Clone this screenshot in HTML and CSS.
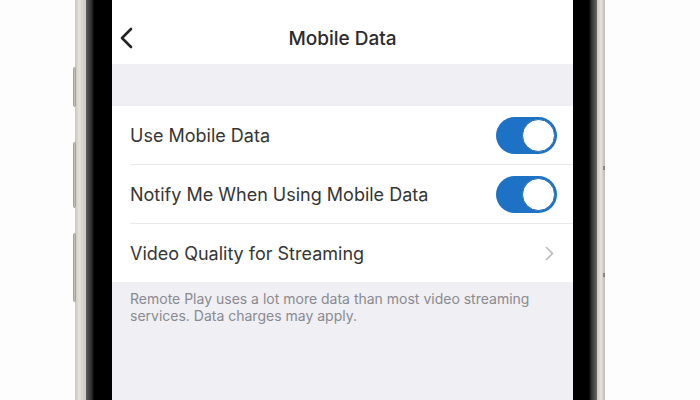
FILE: index.html
```html
<!DOCTYPE html>
<html lang="en">
<head>
  <meta charset="UTF-8" />
  <meta name="viewport" content="width=device-width, initial-scale=1" />
  <title>Mobile Data</title>
  <link rel="stylesheet" href="styles.css">
</head>
<body>
  <div class="phone">
    <span class="side-btn btn-1"></span>
    <span class="side-btn btn-2"></span>
    <span class="side-btn btn-3"></span>
    <span class="side-dot dot-1"></span>
    <span class="side-dot dot-2"></span>

    <div class="bezel">
      <div class="screen">
        <header class="nav">
          <button class="back" aria-label="Back">
            <svg width="16" height="22" viewBox="0 0 16 22">
              <path d="M12 2 L3 11 L12 20" fill="none" stroke="#222" stroke-width="2.6" stroke-linecap="round" stroke-linejoin="round"/>
            </svg>
          </button>
          <h1>Mobile Data</h1>
        </header>

        <div class="spacer"></div>

        <ul class="settings">
          <li class="row">
            <span>Use Mobile Data</span>
            <span class="toggle on"><span class="knob"></span></span>
          </li>
          <li class="row">
            <span>Notify Me When Using Mobile Data</span>
            <span class="toggle on"><span class="knob"></span></span>
          </li>
          <li class="row">
            <span>Video Quality for Streaming</span>
            <svg class="chevron" width="9" height="15" viewBox="0 0 9 15">
              <path d="M1.5 1.5 L7.5 7.5 L1.5 13.5" fill="none" stroke="#b9b9be" stroke-width="1.6" stroke-linecap="round" stroke-linejoin="round"/>
            </svg>
          </li>
        </ul>

        <p class="note">Remote Play uses a lot more data than most video streaming services. Data charges may apply.</p>
      </div>
    </div>
  </div>
</body>
</html>
```

FILE: styles.css
```css
* {
  box-sizing: border-box;
}
body {
  margin: 0;
  height: 400px;
  overflow: hidden;
  background: #fdfdfd;
  font-family: Inter, "Liberation Sans", sans-serif;
}

/* handset frame */
.phone {
  position: relative;
  width: 530px;
  height: 400px;
  margin-left: 75px;
  padding: 0 8px 0 11px;
  background: linear-gradient(to right, #c9c5bd 0, #e4e2dc 4px, #d2cec6 9px, #d2cec6 calc(100% - 7px), #e6e4de calc(100% - 4px), #bdb9b1 100%);
}
.bezel {
  height: 100%;
  padding: 0 24px 0 26px;
  background: linear-gradient(to right, #5d5d5d 0, #2a2a2a 6px, #000 8px, #000 calc(100% - 8px), #2a2a2a calc(100% - 6px), #6a6a6a 100%);
}
.side-btn {
  position: absolute;
  left: -2px;
  width: 3px;
  border-radius: 2px;
  background: #c4c0b8;
  border: 1px solid #a5a197;
}
.btn-1 { top: 67px; height: 40px; }
.btn-2 { top: 142px; height: 66px; }
.btn-3 { top: 233px; height: 69px; }
.side-dot {
  position: absolute;
  right: 0;
  width: 2px;
  height: 4px;
  background: #8a867e;
}
.dot-1 { top: 166px; }
.dot-2 { top: 273px; }

/* screen contents */
.screen {
  height: 100%;
  background: #efeff4;
  display: flex;
  flex-direction: column;
}
.nav {
  height: 64px;
  padding-top: 12px;
  background: #fff;
  display: flex;
  align-items: center;
  justify-content: center;
  position: relative;
}
.nav h1 {
  margin: 0;
  font-size: 19px;
  font-weight: 500;
  color: #2b2b2b;
}
.back {
  position: absolute;
  left: 7px;
  top: 27px;
  padding: 0;
  border: none;
  background: none;
  display: flex;
}
.spacer {
  height: 42px;
}
.settings {
  list-style: none;
  margin: 0;
  padding: 0 0 0 18px;
  background: #fff;
}
.row {
  height: 59px;
  padding-right: 16px;
  display: flex;
  align-items: center;
  justify-content: space-between;
  font-size: 18px;
  color: #353535;
  border-bottom: 1px solid #e9e9ec;
}
.row:last-child {
  height: 58px;
  border-bottom: none;
  padding-right: 19px;
}
.toggle {
  width: 61px;
  height: 37px;
  border-radius: 19px;
  background: #1d72c6;
  padding: 2px;
  display: flex;
}
.toggle.on {
  justify-content: flex-end;
}
.knob {
  width: 33px;
  height: 33px;
  border-radius: 50%;
  background: #fff;
  border: 1.5px solid #2a6fb5;
}
.note {
  margin: 0;
  padding: 8px 30px 0 18px;
  font-size: 14px;
  line-height: 17px;
  color: #8a8a8f;
}
```
